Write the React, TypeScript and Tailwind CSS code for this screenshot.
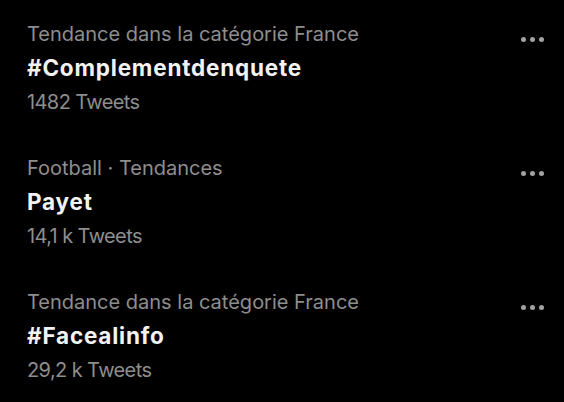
const trends = [
  { context: 'Tendance dans la catégorie France', name: '#Complementdenquete', count: '1482 Tweets' },
  { context: 'Football · Tendances', name: 'Payet', count: '14,1 k Tweets' },
  { context: 'Tendance dans la catégorie France', name: '#Facealinfo', count: '29,2 k Tweets' },
]

function MoreIcon() {
  return (
    <svg width="23" height="5" viewBox="0 0 23 5" className="fill-[#a2a2a2]">
      <circle cx="2.5" cy="2.5" r="2.5" />
      <circle cx="11.5" cy="2.5" r="2.5" />
      <circle cx="20.5" cy="2.5" r="2.5" />
    </svg>
  )
}

export default function App() {
  return (
    <div className="w-[564px] h-[402px] bg-black font-['Inter',sans-serif] overflow-hidden">
      {trends.map((t) => (
        <div key={t.name} className="flex justify-between h-[134px] pt-[17px] pl-[27px] pr-[20px]">
          <div className="flex flex-col">
            <span className="text-[20px] leading-[34px] text-[#8e8e8e]">{t.context}</span>
            <span className="text-[22.5px] leading-[34px] font-bold tracking-[0.8px] text-[#f2f2f2]">{t.name}</span>
            <span className="text-[20px] leading-[34px] tracking-[-0.6px] text-[#8e8e8e]">{t.count}</span>
          </div>
          <div className="mt-[20px]">
            <MoreIcon />
          </div>
        </div>
      ))}
    </div>
  )
}
